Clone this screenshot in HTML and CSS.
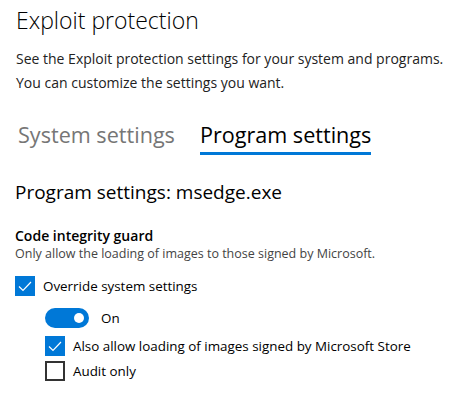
FILE: index.html
```html
<!DOCTYPE html>
<html lang="en">
<head>
  <meta charset="UTF-8" />
  <title>Exploit protection</title>
  <link rel="stylesheet" href="styles.css">
</head>
<body>
  <div class="page">
    <h1 class="title">Exploit protection</h1>
    <p class="intro">See the Exploit protection settings for your system and programs.<br>You can customize the settings you want.</p>

    <div class="tabs">
      <span class="tab">System settings</span>
      <span class="tab active">Program settings</span>
    </div>

    <h2 class="program">Program settings: msedge.exe</h2>

    <div class="section">
      <h3 class="section-title">Code integrity guard</h3>
      <p class="section-desc">Only allow the loading of images to those signed by Microsoft.</p>

      <label class="check-row">
        <span class="box checked">
          <svg viewBox="0 0 20 20" width="20" height="20"><path d="M4 10.5l4 4 8-8.5" fill="none" stroke="#fff" stroke-width="1.2"/></svg>
        </span>
        <span>Override system settings</span>
      </label>

      <div class="nested">
        <div class="toggle-row">
          <span class="toggle"><span class="knob"></span></span>
          <span>On</span>
        </div>
        <label class="check-row small">
          <span class="box checked">
            <svg viewBox="0 0 20 20" width="20" height="20"><path d="M4 10.5l4 4 8-8.5" fill="none" stroke="#fff" stroke-width="1.2"/></svg>
          </span>
          <span>Also allow loading of images signed by Microsoft Store</span>
        </label>
        <label class="check-row small">
          <span class="box"></span>
          <span>Audit only</span>
        </label>
      </div>
    </div>
  </div>
</body>
</html>
```

FILE: styles.css
```css
* {
  margin: 0;
  padding: 0;
  box-sizing: border-box;
}

body {
  background: #fff;
  color: #000;
  font-family: 'Open Sans', 'Noto Sans', sans-serif;
}

.page {
  padding: 3px 0 0 15px;
}

.title {
  font-size: 23px;
  font-weight: 300;
  line-height: 34px;
  margin-left: 1px;
}

.intro {
  font-size: 14px;
  line-height: 24px;
  color: #222;
  margin-top: 10px;
  margin-left: 1px;
}

.tabs {
  display: flex;
  gap: 25px;
  margin-top: 25px;
  margin-left: 3px;
}

.tab {
  font-size: 21.6px;
  line-height: 30px;
  color: #767676;
  padding-bottom: 2px;
  border-bottom: 3px solid transparent;
}

.tab.active {
  color: #000;
  border-bottom-color: #0078d7;
}

.program {
  font-size: 19px;
  font-weight: 400;
  line-height: 26px;
  margin-top: 24px;
}

.section {
  margin-top: 21px;
}

.section-title {
  font-size: 14px;
  font-weight: 600;
  line-height: 20px;
}

.section-desc {
  font-size: 12.5px;
  color: #444;
  line-height: 16px;
}

.check-row {
  display: flex;
  align-items: center;
  gap: 8px;
  font-size: 13.4px;
  margin-top: 14px;
}

.box {
  width: 20px;
  height: 20px;
  border: 2px solid #333;
  display: inline-block;
  flex-shrink: 0;
}

.box.checked {
  background: #0078d7;
  border: none;
}

.box svg {
  display: block;
}

.nested {
  margin-left: 30px;
  margin-top: 12px;
}

.toggle-row {
  display: flex;
  align-items: center;
  gap: 12px;
  font-size: 13.4px;
}

.toggle {
  width: 44px;
  height: 20px;
  border-radius: 10px;
  background: #0078d7;
  position: relative;
}

.knob {
  position: absolute;
  right: 5px;
  top: 5px;
  width: 10px;
  height: 10px;
  border-radius: 50%;
  background: #fff;
}

.check-row.small {
  margin-top: 8px;
}

.check-row.small + .check-row.small {
  margin-top: 5px;
}
```
